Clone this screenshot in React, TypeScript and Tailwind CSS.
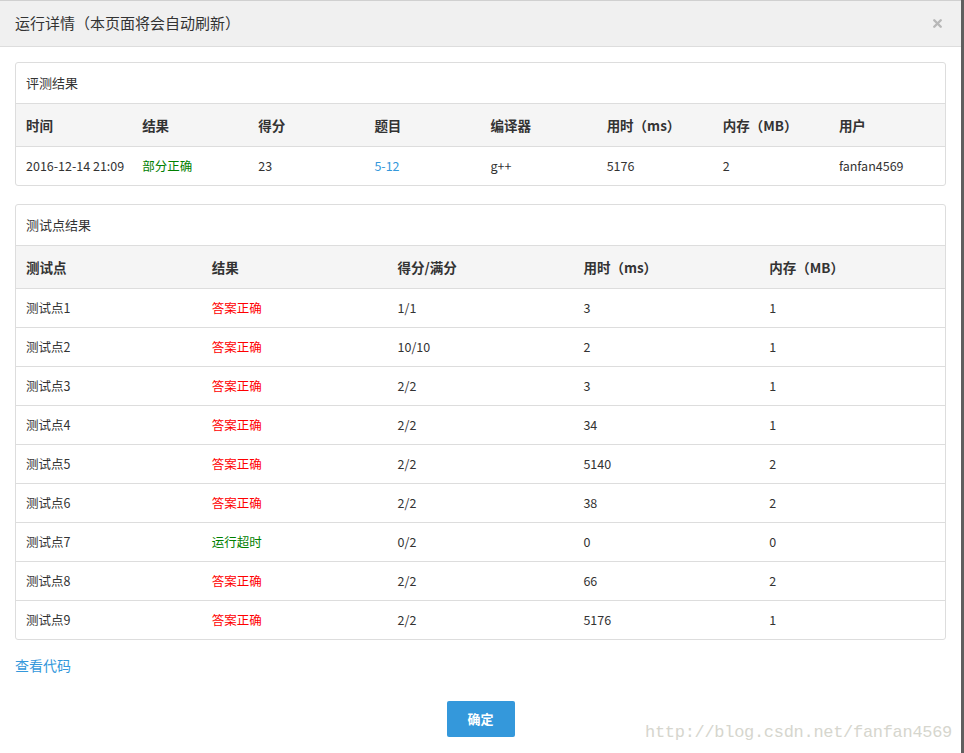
import { X } from "lucide-react";

const summaryHead = ["时间", "结果", "得分", "题目", "编译器", "用时（ms）", "内存（MB）", "用户"];

const cases = [
  { name: "测试点1", ok: true, score: "1/1", time: "3", mem: "1" },
  { name: "测试点2", ok: true, score: "10/10", time: "2", mem: "1" },
  { name: "测试点3", ok: true, score: "2/2", time: "3", mem: "1" },
  { name: "测试点4", ok: true, score: "2/2", time: "34", mem: "1" },
  { name: "测试点5", ok: true, score: "2/2", time: "5140", mem: "2" },
  { name: "测试点6", ok: true, score: "2/2", time: "38", mem: "2" },
  { name: "测试点7", ok: false, score: "0/2", time: "0", mem: "0" },
  { name: "测试点8", ok: true, score: "2/2", time: "66", mem: "2" },
  { name: "测试点9", ok: true, score: "2/2", time: "5176", mem: "1" },
];

const font = { fontFamily: '"Noto Sans CJK SC", "Liberation Sans", sans-serif' };

function Panel({ title, children }: { title: string; children: React.ReactNode }) {
  return (
    <section className="overflow-hidden rounded-[3px] border border-[#ddd] bg-white">
      <div className="flex h-[41px] items-center border-b border-[#ddd] px-[10px] text-[13px] text-[#333]">{title}</div>
      {children}
    </section>
  );
}

export default function App() {
  return (
    <div className="flex h-[753px] w-[964px] bg-white text-[#333]" style={font}>
      <div className="flex min-w-0 flex-1 flex-col border-t border-[#d0d0d0]">
        {/* Header */}
        <header className="flex h-[46px] items-center justify-between border-b border-[#ddd] bg-[#f0f0f0] pl-[15px] pr-[17px]">
          <h1 className="text-[15px] font-normal text-[#333]">运行详情（本页面将会自动刷新）</h1>
          <X size={13} strokeWidth={4.5} className="text-[#b8b8b8]" />
        </header>

        <main className="flex flex-col gap-[18px] px-[15px] pt-[15px]">
          {/* 评测结果 */}
          <Panel title="评测结果">
            <div className="grid grid-cols-8 border-b border-[#ddd] bg-[#f5f5f5]">
              {summaryHead.map((h) => (
                <div key={h} className="flex h-[42px] items-center px-[10px] text-[13.5px] font-bold text-[#333]">
                  {h}
                </div>
              ))}
            </div>
            <div className="grid h-[38px] grid-cols-8 items-center text-[12.5px] text-[#333]">
              <div className="whitespace-nowrap px-[10px]">2016-12-14 21:09</div>
              <div className="px-[10px] text-[#008000]">部分正确</div>
              <div className="px-[10px]">23</div>
              <div className="px-[10px] text-[#3498db]">5-12</div>
              <div className="px-[10px]">g++</div>
              <div className="px-[10px]">5176</div>
              <div className="px-[10px]">2</div>
              <div className="px-[10px]">fanfan4569</div>
            </div>
          </Panel>

          {/* 测试点结果 */}
          <Panel title="测试点结果">
            <div className="grid grid-cols-5 border-b border-[#ddd] bg-[#f5f5f5]">
              {["测试点", "结果", "得分/满分", "用时（ms）", "内存（MB）"].map((h) => (
                <div key={h} className="flex h-[42px] items-center px-[10px] text-[13.5px] font-bold text-[#333]">
                  {h}
                </div>
              ))}
            </div>
            {cases.map((c, i) => (
              <div
                key={c.name}
                className={
                  i < cases.length - 1
                    ? "grid h-[39px] grid-cols-5 items-center border-b border-[#ddd] text-[12.5px]"
                    : "grid h-[38px] grid-cols-5 items-center text-[12.5px]"
                }
              >
                <div className="px-[10px]">{c.name}</div>
                <div className={c.ok ? "px-[10px] text-[#ff0000]" : "px-[10px] text-[#008000]"}>
                  {c.ok ? "答案正确" : "运行超时"}
                </div>
                <div className="px-[10px]">{c.score}</div>
                <div className="px-[10px]">{c.time}</div>
                <div className="px-[10px]">{c.mem}</div>
              </div>
            ))}
          </Panel>

          <a className="-mt-[3px] w-fit text-[14px] text-[#3498db]">查看代码</a>
        </main>

        {/* Footer */}
        <footer className="relative mt-[25px] flex justify-center">
          <button className="h-[36px] w-[68px] rounded-[2px] bg-[#3498db] text-[13px] font-bold text-white">确定</button>
          <span
            className="absolute right-[9px] top-[19px] text-[17px] tracking-[-0.3px] text-[#d6d6ce]"
            style={{ fontFamily: '"Liberation Mono", monospace' }}
          >
            http://blog.csdn.net/fanfan4569
          </span>
        </footer>
      </div>
      <div className="w-[3px] shrink-0 bg-[#5f5f5f]" />
    </div>
  );
}
